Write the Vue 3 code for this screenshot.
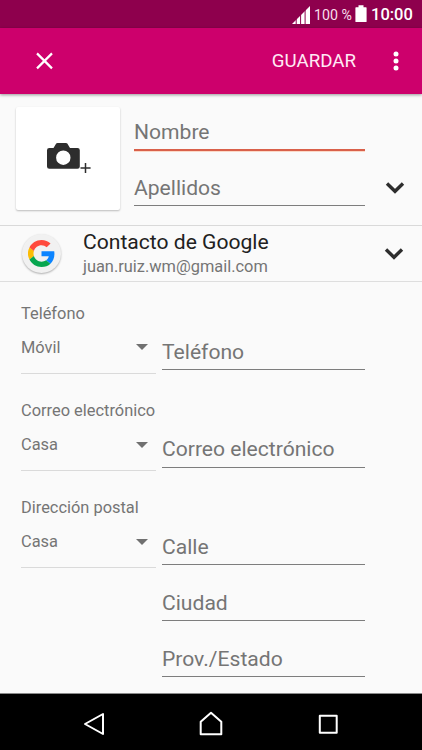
<script setup>
const groups = [
  { label: 'Teléfono', type: 'Móvil', fields: ['Teléfono'] },
  { label: 'Correo electrónico', type: 'Casa', fields: ['Correo electrónico'] },
  { label: 'Dirección postal', type: 'Casa', fields: ['Calle', 'Ciudad', 'Prov./Estado'] },
]
</script>

<template>
  <div class="screen">
    <div class="status">
      <svg class="signal" width="18" height="18" viewBox="0 0 18 18">
        <path d="M0 18 18 0V18Z" fill="#fff" />
        <path d="M4.2 10V18M8.6 6V18M13.1 2V18" stroke="#8e004d" stroke-width="1" />
      </svg>
      <span class="percent">100 %</span>
      <svg class="battery" width="12" height="18" viewBox="0 0 12 18">
        <path d="M3.5 0.3h5v2H11a.6.6 0 0 1 .6.6v13.6a.6.6 0 0 1-.6.6H1a.6.6 0 0 1-.6-.6V2.900a.6.6 0 0 1 .6-.6h2.500z" fill="#fff" />
      </svg>
      <span class="clock">10:00</span>
    </div>

    <header class="appbar">
      <svg class="close" width="18" height="18" viewBox="0 0 18 18">
        <path d="M1 1.400 16 16.400M16 1.400 1 16.400" stroke="#fff" stroke-width="2.200" />
      </svg>
      <span class="save">GUARDAR</span>
      <svg class="more" width="6" height="20" viewBox="0 0 6 20">
        <circle cx="3" cy="3" r="2.500" fill="#fff" />
        <circle cx="3" cy="10" r="2.500" fill="#fff" />
        <circle cx="3" cy="17" r="2.500" fill="#fff" />
      </svg>
    </header>

    <section class="identity">
      <div class="photo">
        <svg width="46" height="34" viewBox="0 0 46 34">
          <path fill="#2d2d2d" fill-rule="evenodd" d="M11.500 1h8.500q.8 0 1.300.6l2.700 4.400h7.500a2.300 2.300 0 0 1 2.300 2.300v16.200a2.300 2.300 0 0 1-2.300 2.300H3.300a2.300 2.300 0 0 1-2.300-2.300V8.300A2.300 2.300 0 0 1 3.300 6h4.200l2.700-4.400q.5-.6 1.300-.6zM17.300 8.500a7.200 7.200 0 1 0 0 14.400 7.200 7.200 0 0 0 0-14.400z" />
          <path d="M39.500 21V31M34.500 26H44.600" stroke="#2d2d2d" stroke-width="1.500" />
        </svg>
      </div>
      <div class="names">
        <div class="field focused">Nombre</div>
        <div class="field">Apellidos</div>
      </div>
      <svg class="chevron name-chevron" width="20" height="14" viewBox="0 0 20 14">
        <path d="M2 2.500 10 10.300 18 2.500" />
      </svg>
    </section>

    <section class="account">
      <div class="badge">
        <svg width="27" height="27" viewBox="0 0 48 48">
          <path fill="#fbbc05" d="M10.530 28.590a14.500 14.500 0 0 1 0-9.180l-7.980-6.190a24 24 0 0 0 0 21.560z" />
          <path fill="#ff4a3d" d="M24 9.500c3.540 0 6.710 1.220 9.210 3.600l6.850-6.850C35.900 2.380 30.470 0 24 0 14.620 0 6.510 5.380 2.560 13.220l7.980 6.190C12.430 13.720 17.740 9.500 24 9.500z" />
          <path fill="#0b84ff" d="M46.980 24.550c0-1.570-.15-3.090-.38-4.550H24v9.020h12.940c-.58 2.960-2.260 5.480-4.780 7.180l7.730 6c4.510-4.180 7.090-10.360 7.090-17.650z" />
          <path fill="#07a64f" d="M24 48c6.480 0 11.930-2.130 15.890-5.810l-7.730-6c-2.150 1.450-4.920 2.300-8.160 2.300-6.260 0-11.570-4.220-13.470-9.910l-7.980 6.190C6.510 42.620 14.620 48 24 48z" />
        </svg>
      </div>
      <div class="account-text">
        <div class="account-title">Contacto de Google</div>
        <div class="account-mail">juan.ruiz.wm@gmail.com</div>
      </div>
      <svg class="chevron" width="20" height="14" viewBox="0 0 20 14">
        <path d="M2 2.500 10 10.300 18 2.500" />
      </svg>
    </section>

    <main class="form">
      <section v-for="group in groups" :key="group.label" class="group">
        <div class="label">{{ group.label }}</div>
        <div class="row">
          <div class="select">
            <span>{{ group.type }}</span>
            <svg width="12" height="6" viewBox="0 0 12 6"><path d="M0 0H12L6 6Z" fill="#707070" /></svg>
          </div>
          <div class="inputs">
            <div v-for="field in group.fields" :key="field" class="field">{{ field }}</div>
          </div>
        </div>
      </section>
    </main>

    <nav class="navbar">
      <svg width="24" height="26" viewBox="0 0 24 26">
        <path d="M3 13 21 3V23Z" />
      </svg>
      <svg width="24" height="26" viewBox="0 0 24 26">
        <path d="M1.700 10.700 12 1.700 22.300 10.700V23.200H1.700Z" />
      </svg>
      <svg width="24" height="26" viewBox="0 0 24 26">
        <path d="M3.800 4.700H20.700V21.700H3.800Z" />
      </svg>
    </nav>
  </div>
</template>

<style>
body {
  margin: 0;
  overflow: hidden;
}
</style>

<style scoped>
.screen {
  box-sizing: border-box;
  display: flex;
  flex-direction: column;
  width: 422px;
  height: 750px;
  overflow: hidden;
  background: #fafafa;
  color: #757575;
  font-family: Roboto, "Liberation Sans", sans-serif;
  font-size: 16.4px;
  white-space: nowrap;
}
svg {
  display: block;
  flex: none;
}
.status {
  box-sizing: border-box;
  flex: none;
  display: flex;
  align-items: center;
  justify-content: flex-end;
  height: 28px;
  padding: 1px 9px 0 0;
  background: #8e004d;
  color: #fff;
}
.signal {
  margin-right: 4px;
}
.percent {
  width: 37px;
  margin-right: 4px;
  font-size: 14.2px;
  color: #f7dcea;
}
.battery {
  margin: 0 4px 2px 0;
}
.clock {
  width: 42px;
  font-size: 16.500px;
  font-weight: 500;
}
.appbar {
  position: relative;
  box-sizing: border-box;
  flex: none;
  display: flex;
  align-items: center;
  height: 66px;
  padding: 0 23px 0 36px;
  background: #cd006c;
  box-shadow: 0 1px 3px rgba(0, 0, 0, 0.4);
}
.save {
  margin: 0 37px 0 auto;
  color: #ffe9f5;
  font-size: 18.7px;
}
.identity {
  box-sizing: border-box;
  flex: none;
  display: flex;
  height: 132px;
  padding: 13px 17px 0 16px;
  border-bottom: 1px solid #d9d9d9;
}
.photo {
  box-sizing: border-box;
  width: 104px;
  height: 103px;
  padding: 35px 0 0 30px;
  border-radius: 2px;
  background: #fff;
  box-shadow: 0 1px 2px rgba(0, 0, 0, 0.25);
}
.names {
  width: 230.500px;
  margin-left: 14px;
}
.field {
  box-sizing: border-box;
  height: 56.25px;
  padding-top: 26px;
  border-bottom: 1px solid #7d7d7d;
  font-size: 21.1px;
  line-height: 24px;
}
.names .field:first-child {
  height: 43.500px;
  padding-top: 13px;
}
.names .field:last-child {
  height: 55.500px;
  padding-top: 25.500px;
}
.field.focused {
  border-bottom: 2px solid #d9604a;
  box-shadow: 0 1px 0 #fbd9c8;
}
.chevron {
  fill: none;
  stroke: #2d2d2d;
  stroke-width: 3.400;
  stroke-linecap: butt;
}
.name-chevron {
  margin: 74px 0 0 auto;
}
.account {
  box-sizing: border-box;
  flex: none;
  display: flex;
  align-items: center;
  height: 56px;
  padding: 0 18px 0 22px;
  border-bottom: 1px solid #dedede;
}
.badge {
  display: flex;
  align-items: center;
  justify-content: center;
  width: 39px;
  height: 39px;
  border-radius: 50%;
  background: #f1f1f1;
  box-shadow: 0 1px 2px rgba(0, 0, 0, 0.3);
}
.account-text {
  margin: 0 auto 0 22px;
}
.account-title {
  color: #212121;
  font-size: 21.1px;
  line-height: 26px;
}
.account-mail {
  font-size: 16.4px;
  line-height: 24px;
}
.form {
  flex: 1;
  min-height: 0;
  padding: 21.500px 0 0 21px;
  overflow: hidden;
}
.group {
  height: 97.250px;
}
.label {
  height: 20px;
  line-height: 20px;
}
.row {
  display: flex;
}
.select {
  box-sizing: border-box;
  display: flex;
  justify-content: space-between;
  width: 135px;
  height: 50.300px;
  padding: 14.300px 8px 0 0;
  border-bottom: 1px solid #dadada;
  line-height: 20px;
}
.select svg {
  margin-top: 6.700px;
}
.inputs {
  width: 202.500px;
  margin: -9.500px 0 0 6px;
}
.navbar {
  box-sizing: border-box;
  flex: none;
  display: flex;
  justify-content: space-between;
  height: 57px;
  padding: 17px 82px 0;
  border-top: 1px solid #8a8a8a;
  background: #000;
}
.navbar path {
  fill: none;
  stroke: #fff;
  stroke-width: 2;
  stroke-linejoin: round;
}
</style>
